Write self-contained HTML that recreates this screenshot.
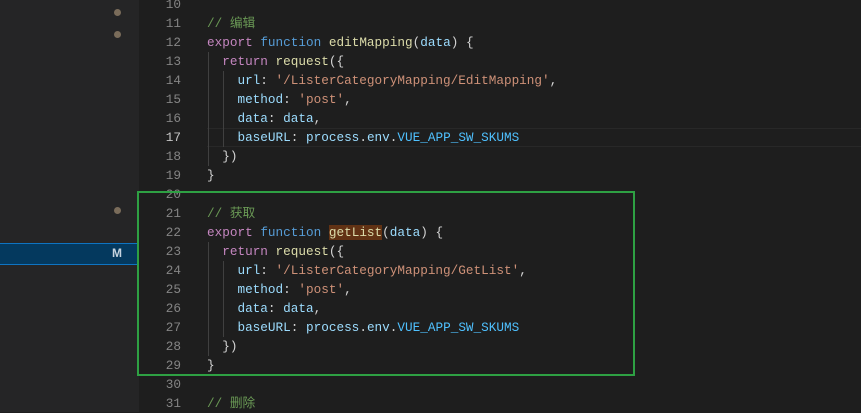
<!DOCTYPE html>
<html><head><style>
body{margin:0;width:861px;height:412px;overflow:hidden;background:#1e1e1e;position:relative;font-family:"Liberation Mono","Noto Sans CJK SC",monospace;font-size:12.7px}
#side{position:absolute;left:0;top:0;width:139px;height:412px;background:#252526}
.dot{position:absolute;left:114px;width:7px;height:7px;border-radius:50%;background:#7a6c5a}
#sel{position:absolute;left:0;top:243px;width:139px;height:20px;background:#04395e;border-top:1px solid #0e74c2;border-bottom:1px solid #0e74c2}
#sel span{position:absolute;left:112px;top:2px;color:#c5d3df;font-family:"Liberation Sans",sans-serif;font-weight:bold;font-size:12px}
.ln{position:absolute;left:140px;width:41px;text-align:right;color:#858585}
.code{position:absolute;left:207px;white-space:pre;color:#9cdcfe}
.row{position:absolute;height:19px;line-height:19px}
.c{color:#6a9955}.k{color:#c586c0}.b{color:#569cd6}.f{color:#dcdcaa}.s{color:#ce9178}.w{color:#d4d4d4}.v{color:#9cdcfe}.e{color:#4fc1ff}
.g{position:absolute;width:1px;background:#404040}
#box{position:absolute;left:137px;top:191px;width:494px;height:181px;border:2px solid #2ea043}
.hl{background:#613214}
</style></head><body>
<div id="side"></div>
<div class="dot" style="top:9px"></div>
<div class="dot" style="top:31px"></div>
<div class="dot" style="top:207px"></div>
<div id="sel"><span>M</span></div>
<div style="position:absolute;left:207px;top:128px;width:654px;height:17px;border-top:1px solid #282828;border-bottom:1px solid #282828"></div>
<div class="g" style="left:208px;top:52px;height:114px"></div>
<div class="g" style="left:223px;top:71px;height:76px"></div>
<div class="g" style="left:208px;top:242px;height:114px"></div>
<div class="g" style="left:223px;top:261px;height:76px"></div>
<div id="lines"></div>
<div id="box"></div>
<script>
var L=[
["10",""],
["11",'<span class="c">// 编辑</span>'],
["12",'<span class="k">export</span> <span class="b">function</span> <span class="f">editMapping</span><span class="w">(</span>data<span class="w">) {</span>'],
["13",'  <span class="k">return</span> <span class="f">request</span><span class="w">({</span>'],
["14",'    url<span class="w">:</span> <span class="s">\'/ListerCategoryMapping/EditMapping\'</span><span class="w">,</span>'],
["15",'    method<span class="w">:</span> <span class="s">\'post\'</span><span class="w">,</span>'],
["16",'    data<span class="w">:</span> data<span class="w">,</span>'],
["17",'    baseURL<span class="w">:</span> process<span class="w">.</span>env<span class="w">.</span><span class="e">VUE_APP_SW_SKUMS</span>'],
["18",'  <span class="w">})</span>'],
["19",'<span class="w">}</span>'],
["20",""],
["21",'<span class="c">// 获取</span>'],
["22",'<span class="k">export</span> <span class="b">function</span> <span class="f hl">getList</span><span class="w">(</span>data<span class="w">) {</span>'],
["23",'  <span class="k">return</span> <span class="f">request</span><span class="w">({</span>'],
["24",'    url<span class="w">:</span> <span class="s">\'/ListerCategoryMapping/GetList\'</span><span class="w">,</span>'],
["25",'    method<span class="w">:</span> <span class="s">\'post\'</span><span class="w">,</span>'],
["26",'    data<span class="w">:</span> data<span class="w">,</span>'],
["27",'    baseURL<span class="w">:</span> process<span class="w">.</span>env<span class="w">.</span><span class="e">VUE_APP_SW_SKUMS</span>'],
["28",'  <span class="w">})</span>'],
["29",'<span class="w">}</span>'],
["30",""],
["31",'<span class="c">// 删除</span>']];
var h="";
L.forEach(function(l,i){var t=-5+i*19;
h+='<div class="row ln" style="top:'+t+'px;'+(l[0]=="17"?'color:#c6c6c6':'')+'">'+l[0]+'</div>';
h+='<div class="row code" style="top:'+t+'px">'+l[1]+'</div>';});
document.getElementById("lines").innerHTML=h;
</script>
</body></html>
